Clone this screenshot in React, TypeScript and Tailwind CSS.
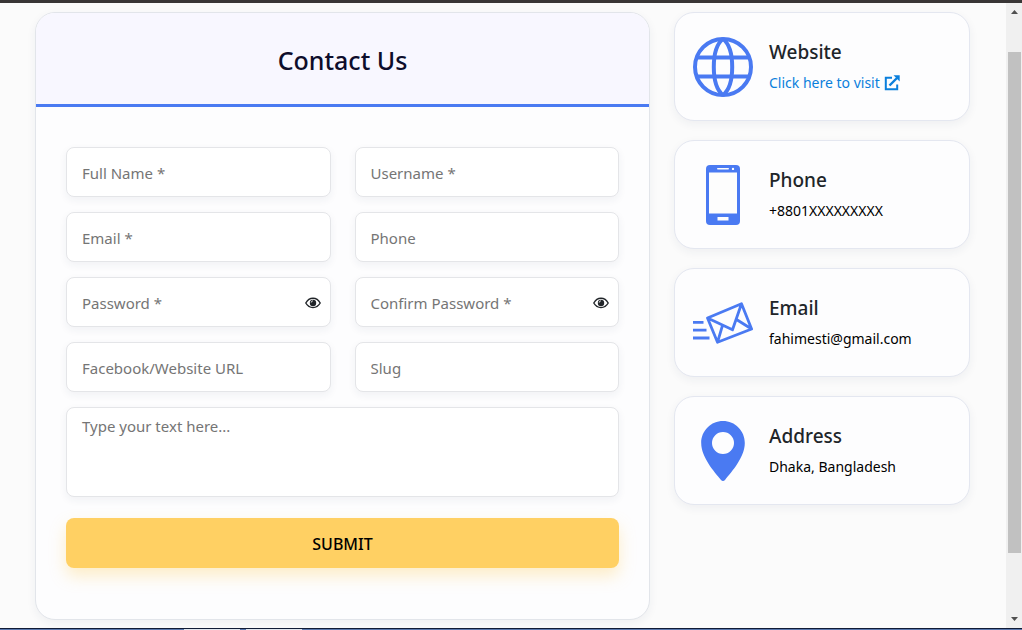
import type { ReactNode } from "react";

function GlobeIcon() {
  return (
    <svg viewBox="0 0 60 60" className="size-15 shrink-0" fill="none" stroke="#4a7af2" strokeWidth="4" aria-hidden="true">
      <circle cx="30" cy="30" r="28" />
      <path d="M30 2C23.500 7 20.800 18 20.800 30S23.500 53 30 58M30 2C36.500 7 39.200 18 39.200 30S36.500 53 30 58" />
      <path d="M4 20.500H56M4 39.500H56" />
    </svg>
  );
}

function MobileIcon() {
  return (
    <svg viewBox="0 0 60 60" className="size-15 shrink-0" aria-hidden="true">
      <rect x="13" y="0" width="34" height="60" rx="4" fill="#4a7af2" />
      <rect x="16" y="7.500" width="28" height="41" fill="#fdfdfd" />
      <rect x="24" y="3" width="12" height="1.600" rx="0.800" fill="#fdfdfd" />
      <circle cx="40" cy="3.900" r="1.200" fill="#fdfdfd" />
      <rect x="24.500" y="52" width="11" height="3.500" fill="#fdfdfd" />
    </svg>
  );
}

function MailIcon() {
  return (
    <svg viewBox="0 0 60 60" className="size-15 shrink-0" fill="none" stroke="#4a7af2" strokeWidth="2.800" strokeLinejoin="round" aria-hidden="true">
      <path d="M14.500 25L48.500 10.700L58.600 36L24.500 49.300ZM14.500 25L39.500 36.800L48.500 10.700M29.500 32.300L24.500 49.300M43.500 26.500L58.600 36" />
      <path d="M0 29.300H10.500M0 37.200H13.500M0 45H16.500" />
    </svg>
  );
}

function PinIcon() {
  return (
    <svg viewBox="0 0 60 60" className="size-15 shrink-0" fill="#4a7af2" aria-hidden="true">
      <path fillRule="evenodd" d="M30 0C18 0 8.200 9.700 8.200 22C8.200 36 21 50.500 27.800 58.700Q30 61.200 32.200 58.700C39 50.500 51.800 36 51.800 22C51.800 9.700 42 0 30 0ZM30 11A11 11 0 1 1 30 33A11 11 0 1 1 30 11Z" />
    </svg>
  );
}

function ExternalIcon() {
  return (
    <svg viewBox="0 0 16 16" className="size-4" fill="none" stroke="#0a7fdc" strokeWidth="2" aria-hidden="true">
      <path d="M8 2.800H1.800V14.300H13.200V9.500" />
      <path d="M5.500 10.500L13 3" strokeWidth="2.400" />
      <path d="M9.500 0.300H15.700V6.500Z" fill="#0a7fdc" stroke="none" />
    </svg>
  );
}

function EyeIcon() {
  return (
    <svg viewBox="0 0 16 12" className="h-3 w-4" aria-hidden="true">
      <path d="M0.800 6C4.200 -0.400 11.800 -0.400 15.200 6C11.800 12 4.200 12 0.800 6Z" fill="none" stroke="#212529" strokeWidth="1.400" />
      <circle cx="8" cy="5.900" r="3.200" fill="#212529" />
      <path d="M6.200 5.600A1.800 1.800 0 0 1 8 3.800" fill="none" stroke="#fff" strokeWidth="0.800" />
    </svg>
  );
}

const fieldStyle =
  "block w-full rounded-lg border border-[#e4e5e8] bg-white px-[15px] text-[15px] text-[#212529] shadow-[0_3px_8px_rgba(30,50,90,0.06)] placeholder:text-[#757575] placeholder:opacity-100 outline-none focus:border-[#4a7af2]";

function Field({ label, type = "text" }: { label: string; type?: string }) {
  return (
    <div className="relative">
      <input type={type} aria-label={label} placeholder={label} className={`${fieldStyle} h-[50px] pt-0.5`} />
      {type === "password" && (
        <button type="button" aria-label="Show password" className="absolute inset-y-0 right-2.5 flex items-center pt-0.5">
          <EyeIcon />
        </button>
      )}
    </div>
  );
}

function InfoCard({ icon, title, children }: { icon: ReactNode; title: string; children: ReactNode }) {
  return (
    <section className="flex items-center gap-4 rounded-[20px] border border-[#e4e7f0] bg-[#fdfdfe] px-[18px] py-[23px] shadow-[0_3px_10px_rgba(30,50,90,0.06)]">
      {icon}
      <div>
        <h2 className="text-[19px] leading-8 font-medium text-[#212529]">{title}</h2>
        <div className="text-[14px] leading-[29px] text-black">{children}</div>
      </div>
    </section>
  );
}

export default function App() {
  return (
    <div className="flex min-h-screen flex-col border-t-[3px] border-[#393636] bg-[#fbfbfb] font-['Noto_Sans',sans-serif]">
      <div className="flex flex-1">
        <main className="grid flex-1 grid-cols-[615fr_296fr] items-start gap-6 pt-[9px] pr-9 pb-2 pl-[35px]">
          <section className="overflow-hidden rounded-[20px] border border-[#e2e5ea] bg-[#fdfdfe] shadow-[0_3px_10px_rgba(30,50,90,0.06)]">
            <h1 className="border-b-[3px] border-[#4a7af2] bg-[#f8f7ff] pt-[29px] pb-[26px] text-center text-[25px] leading-9 font-medium text-[#0d0d2b]">
              Contact Us
            </h1>
            <form className="grid grid-cols-2 gap-x-6 gap-y-[15px] px-[30px] pt-10 pb-[51px]" onSubmit={(e) => e.preventDefault()}>
              <Field label="Full Name *" />
              <Field label="Username *" />
              <Field label="Email *" type="email" />
              <Field label="Phone" type="tel" />
              <Field label="Password *" type="password" />
              <Field label="Confirm Password *" type="password" />
              <Field label="Facebook/Website URL" type="url" />
              <Field label="Slug" />
              <textarea aria-label="Message" placeholder="Type your text here..." className={`${fieldStyle} col-span-2 h-[90px] resize-none py-[7px]`} />
              <button
                type="submit"
                className="col-span-2 mt-[6px] h-[50px] rounded-lg bg-[#ffd063] pt-0.5 text-[16px] font-medium text-black shadow-[0_8px_16px_rgba(255,208,99,0.35)]"
              >
                SUBMIT
              </button>
            </form>
          </section>
          <aside className="flex flex-col gap-[19px]">
            <InfoCard icon={<GlobeIcon />} title="Website">
              <a href="#website" className="inline-flex items-center gap-1 text-[#0a7fdc]">
                Click here to visit
                <ExternalIcon />
              </a>
            </InfoCard>
            <InfoCard icon={<MobileIcon />} title="Phone">
              +8801XXXXXXXXX
            </InfoCard>
            <InfoCard icon={<MailIcon />} title="Email">
              fahimesti@gmail.com
            </InfoCard>
            <InfoCard icon={<PinIcon />} title="Address">
              Dhaka, Bangladesh
            </InfoCard>
          </aside>
        </main>
        <div className="flex w-4 shrink-0 flex-col items-center bg-[#f0f0f0] py-[7px]" aria-hidden="true">
          <svg viewBox="0 0 7 4" className="h-1 w-[7px]" fill="#505050"><path d="M0 4L3.500 0L7 4Z" /></svg>
          <div className="mt-[38px] mb-16 w-[13px] flex-1 bg-[#c1c1c1]" />
          <svg viewBox="0 0 7 4" className="h-1 w-[7px]" fill="#505050"><path d="M0 0L3.500 4L7 0Z" /></svg>
        </div>
      </div>
      <footer className="flex h-0.5 border-t border-[#101b35] bg-[#5b78ad]">
        <span className="ml-46 h-px w-14 bg-[#dfe5ee]" />
        <span className="ml-1.5 h-px w-14 bg-[#dfe5ee]" />
      </footer>
    </div>
  );
}
